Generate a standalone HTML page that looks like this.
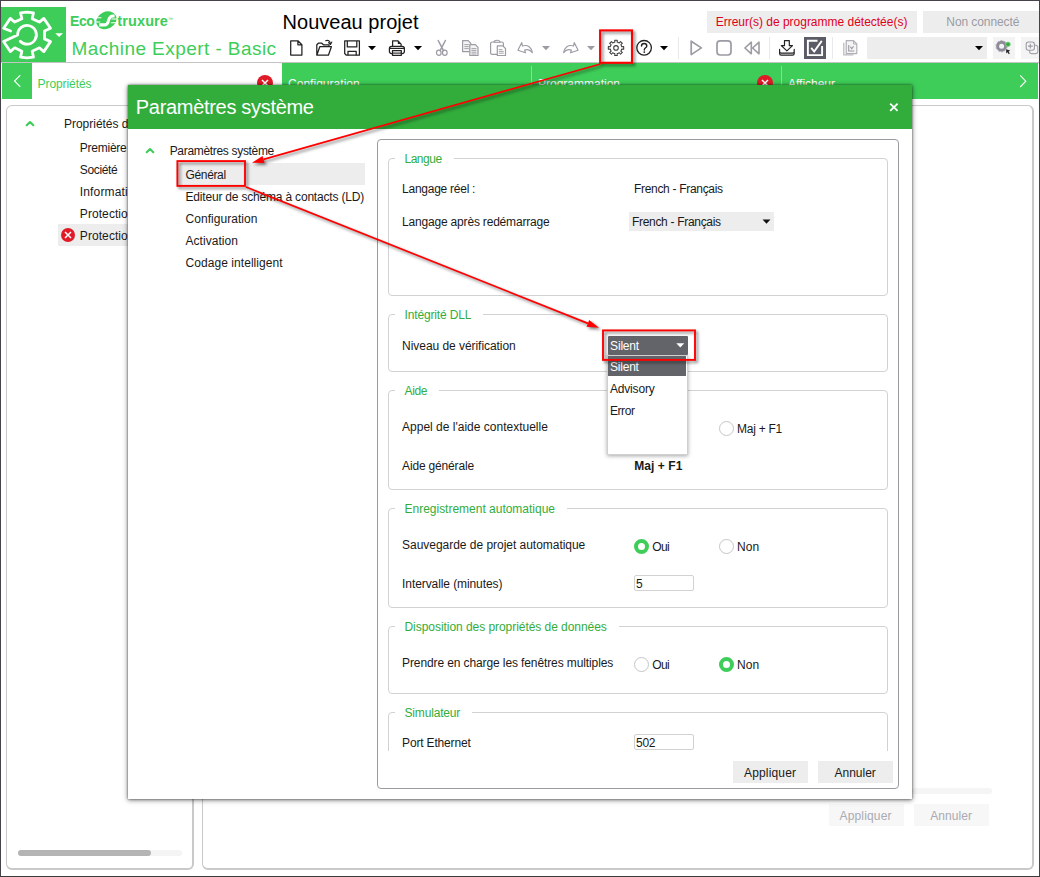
<!DOCTYPE html>
<html lang="fr"><head><meta charset="utf-8"><title>Paramètres système</title>
<style>
html,body{margin:0;padding:0;background:#fff;}
body{width:1040px;height:877px;overflow:hidden;position:relative;font-family:"Liberation Sans",sans-serif;color:#1a1a1a;}
div,span,svg{position:absolute;box-sizing:border-box;}
body>div{left:0;top:0;width:0;height:0;}
.t{white-space:pre;line-height:1;}
.gb{border:1px solid #d2d2d2;border-radius:4px;}
.lg{background:#fff;height:12px;}
.rad{width:15px;height:15px;border-radius:50%;border:1px solid #c6c6c6;background:#fff;}
.rad.on{border:4px solid #3dcd58;}
.inp{border:1px solid #d2d2d2;background:#fff;border-radius:2px;}
.btn{background:#ededed;}
.hl{background:#ededed;}
</style></head>
<body>
<div id="frame">
<div style="left:0px;top:0px;width:1040px;height:1px;background:#47424a;"></div>
<div style="left:0px;top:0px;width:1px;height:877px;background:#47424a;"></div>
<div style="left:1039px;top:0px;width:1px;height:877px;background:#47424a;"></div>
<div style="left:0px;top:876px;width:1040px;height:1px;background:#3a3a3a;"></div>
</div>
<div id="header">
<div style="left:1px;top:7px;width:65px;height:55px;background:#3dcd58;"></div>
<div style="left:1px;top:62px;width:1038px;height:1px;background:#c4c4c4;"></div>
<span class="t" style="left:70.1px;top:14px;font-size:14px;letter-spacing:-0.54px;color:#3dcd58;font-weight:700;">Eco</span>
<span class="t" style="left:168.1px;top:17.3px;font-size:5px;color:#3dcd58;">™</span>
<span class="t" style="left:117.3px;top:13.6px;font-size:14.5px;letter-spacing:0.11px;color:#3dcd58;font-weight:700;">truxure</span>
<span class="t" style="left:71.5px;top:38.5px;font-size:19px;letter-spacing:0.44px;color:#3dcd58;">Machine Expert - Basic</span>
<span class="t" style="left:282.5px;top:12px;font-size:20px;letter-spacing:0.03px;color:#000;">Nouveau projet</span>
<div style="left:707px;top:11px;width:210px;height:22px;background:#ededed;"></div>
<span class="t" style="left:715.7px;top:15.9px;font-size:12px;letter-spacing:-0.01px;color:#e0001b;">Erreur(s) de programme détectée(s)</span>
<div style="left:923px;top:11px;width:116px;height:22px;background:#ededed;"></div>
<span class="t" style="left:946.3px;top:16px;font-size:12px;letter-spacing:-0.08px;color:#9a9ba3;">Non connecté</span>
<div style="left:804px;top:37px;width:22px;height:22px;background:#5b5c66;"></div>
<div style="left:867px;top:37px;width:120px;height:22px;background:#ededed;"></div>
<div style="left:993.4px;top:37px;width:21.6px;height:22px;background:#f3f3f3;"></div>
<div style="left:1021px;top:37px;width:18px;height:22px;background:#f4f4f4;"></div>
<div style="left:678px;top:37px;width:1px;height:22px;background:#e9e9e9;"></div>
<div style="left:769px;top:37px;width:1px;height:22px;background:#e9e9e9;"></div>
<div style="left:832px;top:37px;width:1px;height:22px;background:#e9e9e9;"></div>
</div>
<div id="tabbar">
<div style="left:2px;top:63px;width:1036px;height:36px;background:#3dcd58;"></div>
<div style="left:32px;top:63px;width:250px;height:36px;background:#fff;"></div>
<div style="left:531px;top:66px;width:1px;height:30px;background:#86de97;"></div>
<div style="left:781px;top:66px;width:1px;height:30px;background:#86de97;"></div>
<span class="t" style="left:37.6px;top:78.2px;font-size:12px;letter-spacing:-0.08px;color:#3dcd58;">Propriétés</span>
<span class="t" style="left:288px;top:78.2px;font-size:12px;letter-spacing:0.03px;color:#fff;">Configuration</span>
<span class="t" style="left:538px;top:78.2px;font-size:12px;color:#fff;">Programmation</span>
<span class="t" style="left:788px;top:78.2px;font-size:12px;letter-spacing:-0.02px;color:#fff;">Afficheur</span>
</div>
<div id="toolbar-icons">
<svg style="left:0px;top:0px;" width="66" height="62" viewBox="0 0 66 62" fill="none"><path d="M10.6 31 L3.6 28.3 L10.3 18.4 L14.7 22.1 L21.9 18.7 L20.5 12.8 L27 12.2 L33.5 12.8 L32.2 18.7 L39.4 22.1 L43.8 18.4 L50.5 28.3 L44.5 31 L44.5 38.9 L50.5 41.6 L43.8 51.6 L39.4 47.8 L32.2 51.2 L33.5 57.2 L27 57.8 L20.5 57.2 L21.9 51.2 L14.7 47.8 L10.3 51.6 L3.6 41.4 L17.6 34.9 A9.4 9.4 0 1 1 20.2 41.3" stroke="#fff" stroke-width="2.8" stroke-linejoin="round" stroke-linecap="round"/><path d="M55.2 33.2h7.8l-3.9 3.9z" fill="#fff"/></svg>
<svg style="left:95px;top:10px;" width="23" height="21" viewBox="0 0 23 21" fill="none"><ellipse cx="11.4" cy="10.3" rx="10.5" ry="8.5" transform="rotate(-27 11.4 10.3)" fill="#3dcd58"/><path d="M4.2 14.9h5.4c2.4 0 3-1.3 3.6-3.3l.6-2c.6-2.1 1.5-3.6 4.2-3.6h1.6" stroke="#fff" stroke-width="3.1"/><path d="M0 7.7h6.4M0 12h5.2M16.4 9h7M15.8 12.7h7" stroke="#fff" stroke-width="1.1"/></svg>
<svg style="left:289px;top:39px;" width="15" height="18" viewBox="0 0 15 18" fill="none"><path d="M1.7 1.8h7.2l4 4v10.3h-11.2z M8.9 1.8v4h4" stroke="#222" stroke-width="1.25" stroke-linejoin="round"/></svg>
<svg style="left:315px;top:38px;" width="19" height="19" viewBox="0 0 19 19" fill="none"><path d="M1.8 17.2v-10.4l1.6-1.6h3.4l1.6 1.6h5.6v1.9 M1.8 17.2l3-8.5h11.6l-3 8.5z" stroke="#222" stroke-width="1.25" stroke-linejoin="round"/><path d="M10.7 2.7c2.4-1 4.4.2 4.7 3.2 M13.5 4.7l2 1.8l1.3-2.4" stroke="#222" stroke-width="1.1" stroke-linecap="round" stroke-linejoin="round"/></svg>
<svg style="left:343px;top:39px;" width="19" height="18" viewBox="0 0 19 18" fill="none"><path d="M1.7 1.9h14.7v14.3h-13l-1.7-1.7z" stroke="#222" stroke-width="1.25" stroke-linejoin="round"/><path d="M4.3 1.9v6h9.5v-6 M5 16.2v-3.9h8.2v3.9" stroke="#222" stroke-width="1.25" stroke-linejoin="round"/></svg>
<svg style="left:368.2px;top:46px;" width="8" height="5" viewBox="0 0 8 5" fill="none"><path d="M0 0h8l-4 4.2z" fill="#000"/></svg>
<svg style="left:388px;top:39px;" width="18" height="18" viewBox="0 0 18 18" fill="none"><path d="M4.6 7.3v-5.5h5.2l3.3 3.3v2.2" stroke="#222" stroke-width="1.25" stroke-linejoin="round"/><path d="M9.8 1.8v3.3h3.3z" fill="#222"/><rect x="1.4" y="7.3" width="15" height="7.2" rx="2.2" stroke="#222" stroke-width="1.25" fill="#fff"/><path d="M1.6 9.4h14.6" stroke="#222" stroke-width="1.2"/><path d="M4.5 11.7h8.8v4.6h-8.8z" stroke="#222" stroke-width="1.25" fill="#fff" stroke-linejoin="round"/><path d="M4.8 14.1h8.2" stroke="#222" stroke-width="1.1"/></svg>
<svg style="left:413.5px;top:46px;" width="8" height="5" viewBox="0 0 8 5" fill="none"><path d="M0 0h8l-4 4.2z" fill="#000"/></svg>
<svg style="left:435px;top:39px;" width="14" height="18" viewBox="0 0 14 18" fill="none"><path d="M3.2 1.5l5.3 10.2 M10.4 1.5l-5.3 10.2" stroke="#9b9ca4" stroke-width="1.5" stroke-linecap="round"/><ellipse cx="3.8" cy="13.8" rx="2.3" ry="2.6" stroke="#9b9ca4" stroke-width="1.2"/><ellipse cx="9.8" cy="13.8" rx="2.3" ry="2.6" stroke="#9b9ca4" stroke-width="1.2"/></svg>
<svg style="left:461px;top:39px;" width="19" height="18" viewBox="0 0 19 18" fill="none"><path d="M1.6 1.6h5.6l2.6 2.7v8.4h-8.2z" stroke="#9b9ca4" stroke-width="1.2" fill="#f4f4f4" stroke-linejoin="round"/><path d="M3.3 5.6h4.5M3.3 7.6h4.5M3.3 9.6h4.5" stroke="#9b9ca4" stroke-width=".9"/><path d="M8.8 5.6h5.6l2.6 2.7v8.2h-8.2z" stroke="#9b9ca4" stroke-width="1.2" fill="#f4f4f4" stroke-linejoin="round"/><path d="M10.4 9.6h5M10.4 11.4h5M10.4 13.2h5M10.4 15h5" stroke="#9b9ca4" stroke-width=".9"/></svg>
<svg style="left:489px;top:39px;" width="19" height="18" viewBox="0 0 19 18" fill="none"><rect x="1.6" y="3" width="12.8" height="12.4" rx="1.6" stroke="#9b9ca4" stroke-width="1.2"/><path d="M5 3.3c0-1.6 1.4-2 3-2s3 .4 3 2z" stroke="#9b9ca4" stroke-width="1.1" fill="#fff"/><path d="M8.3 6.9h5.5l2.7 2.6v7h-8.2z" stroke="#9b9ca4" stroke-width="1.2" fill="#fff" stroke-linejoin="round"/><path d="M9.8 10.6h3.6M9.8 12.4h5M9.8 14.2h5" stroke="#9b9ca4" stroke-width=".9"/></svg>
<svg style="left:516px;top:40px;" width="18" height="15" viewBox="0 0 18 15" fill="none"><path d="M5.8 2.6l-3.9 7.6l7.6 2.6l-.9-2.8c3.4-1.2 6 .2 7.8 2.6c-.8-5-4.6-8.4-10-6.6z" stroke="#9b9ca4" stroke-width="1.15" stroke-linejoin="round"/></svg>
<svg style="left:542.3px;top:46px;" width="8" height="5" viewBox="0 0 8 5" fill="none"><path d="M0 0h8l-4 4.2z" fill="#9b9ca4"/></svg>
<svg style="left:562px;top:40px;" width="18" height="15" viewBox="0 0 18 15" fill="none"><path d="M12.2 2.6l3.9 7.6l-7.6 2.6l.9-2.8c-3.4-1.2-6 .2-7.8 2.6c.8-5 4.6-8.4 10-6.6z" stroke="#9b9ca4" stroke-width="1.15" stroke-linejoin="round"/></svg>
<svg style="left:587.3px;top:46px;" width="8" height="5" viewBox="0 0 8 5" fill="none"><path d="M0 0h8l-4 4.2z" fill="#9b9ca4"/></svg>
<svg style="left:606px;top:38px;" width="20" height="20" viewBox="0 0 20 20" fill="none"><path d="M8.72 2.21 L11.28 2.21 L11.1 4.1 L13.32 5.03 L14.54 3.55 L16.35 5.36 L14.87 6.58 L15.8 8.8 L17.69 8.62 L17.69 11.18 L15.8 11 L14.87 13.22 L16.35 14.44 L14.54 16.25 L13.32 14.77 L11.1 15.7 L11.28 17.59 L8.72 17.59 L8.9 15.7 L6.68 14.77 L5.46 16.25 L3.65 14.44 L5.13 13.22 L4.2 11 L2.31 11.18 L2.31 8.62 L4.2 8.8 L5.13 6.58 L3.65 5.36 L5.46 3.55 L6.68 5.03 L8.9 4.1z" stroke="#3c3c3c" stroke-width="1.05" stroke-linejoin="round"/><circle cx="10" cy="9.9" r="2.3" stroke="#3c3c3c" stroke-width="1.05"/></svg>
<svg style="left:635px;top:39px;" width="18" height="18" viewBox="0 0 18 18" fill="none"><circle cx="9.1" cy="8.8" r="7.3" stroke="#222" stroke-width="1.3"/><path d="M6.5 7.1c0-1.7 1.2-2.6 2.7-2.6s2.6.9 2.6 2.4c0 1.9-2.5 2-2.5 4.1" stroke="#222" stroke-width="1.4" stroke-linecap="round"/><circle cx="9.3" cy="13.1" r=".9" fill="#222"/></svg>
<svg style="left:660px;top:46.1px;" width="8" height="5" viewBox="0 0 8 5" fill="none"><path d="M0 0h8l-4 4.2z" fill="#000"/></svg>
<svg style="left:689px;top:39px;" width="15" height="18" viewBox="0 0 15 18" fill="none"><path d="M2.2 2.2l10.2 6.7l-10.2 6.7z" stroke="#9b9ca4" stroke-width="1.7" stroke-linejoin="round"/></svg>
<svg style="left:715px;top:39px;" width="18" height="18" viewBox="0 0 18 18" fill="none"><rect x="2" y="1.9" width="14" height="14.1" rx="3.2" stroke="#9b9ca4" stroke-width="1.7"/></svg>
<svg style="left:743px;top:40px;" width="18" height="16" viewBox="0 0 18 16" fill="none"><path d="M8.3 2.2v11.6l-6.4-5.8z M16 2.2v11.6l-6.4-5.8z" stroke="#9b9ca4" stroke-width="1.6" stroke-linejoin="round"/></svg>
<svg style="left:778px;top:39px;" width="18" height="18" viewBox="0 0 18 18" fill="none"><path d="M6.5 1.6h4.8v5h3.2l-5.6 5.3l-5.6-5.3h3.2z" stroke="#222" stroke-width="1.2" stroke-linejoin="round"/><path d="M1.6 10.4v4.2c0 1 .6 1.6 1.6 1.6h11.4c1 0 1.6-.6 1.6-1.6v-4.2 M1.6 12.6c0 1 .6 1.6 1.6 1.6h11.4c1 0 1.6-.6 1.6-1.6" stroke="#222" stroke-width="1.2" stroke-linejoin="round" stroke-linecap="round"/></svg>
<svg style="left:804px;top:37px;" width="22" height="22" viewBox="0 0 22 22" fill="none"><path d="M13.5 3.7h-9.6v14.4h14.2v-9" stroke="#fff" stroke-width="1.9"/><path d="M7.2 10.9l3 3.6l7.6-10.6" stroke="#fff" stroke-width="1.9" stroke-linejoin="miter"/></svg>
<svg style="left:842px;top:39px;" width="17" height="18" viewBox="0 0 17 18" fill="none"><path d="M1.8 3.8v12h9.6" stroke="#bcbcc1" stroke-width="1.3"/><path d="M4.2 1.7h7.3l3.3 3.3v9.6h-10.6z" stroke="#b0b0b6" stroke-width="1.2" fill="#f4f4f4" stroke-linejoin="round"/><path d="M11.5 1.7v3.3h3.3" stroke="#b0b0b6" stroke-width="1"/><path d="M6.7 6v6h5.6 M8.4 7.6l1.4 2.2l1.8-2.6" stroke="#9a9aa2" stroke-width="1.1"/></svg>
<svg style="left:974.8px;top:46px;" width="8" height="5" viewBox="0 0 8 5" fill="none"><path d="M0 0h8l-4 4.2z" fill="#000"/></svg>
<svg style="left:993px;top:37px;" width="22" height="22" viewBox="0 0 22 22" fill="none"><circle cx="8.6" cy="9.2" r="4" stroke="#8d8d99" stroke-width="3"/><circle cx="8.6" cy="9.2" r="5.6" stroke="#a9a9b6" stroke-width="1" stroke-dasharray="2 1.5"/><circle cx="15" cy="7.3" r="2.3" fill="#3aa845" stroke="#7fd48a" stroke-width=".8"/><path d="M13.2 12.2l4 1.2l-1.6 1.2l1.2 2l-1 .6l-1.2-2l-1.4 1.4z" fill="#222"/></svg>
<svg style="left:1024px;top:39px;" width="15" height="18" viewBox="0 0 15 18" fill="none"><rect x="5.6" y="6.3" width="8.2" height="8.3" rx="2.2" stroke="#a4a4ab" stroke-width="1.1" fill="#f4f4f4"/><rect x="2.2" y="3" width="8.2" height="8.3" rx="2.2" stroke="#9b9ca4" stroke-width="1.1" fill="#f4f4f4"/><path d="M6.3 4.8v4.7M4 7.15h4.7" stroke="#9b9ca4" stroke-width="1.1"/></svg>
<svg style="left:12px;top:73px;" width="12" height="16" viewBox="0 0 12 16" fill="none"><path d="M8.3 2.2l-5.8 5.8l5.8 5.8" stroke="#fff" stroke-width="1.1"/></svg>
<svg style="left:1017px;top:73px;" width="12" height="16" viewBox="0 0 12 16" fill="none"><path d="M3.2 2.4l5.6 5.8l-5.6 5.8" stroke="#fff" stroke-width="1.1"/></svg>
<svg style="left:257px;top:75px;" width="16" height="16" viewBox="0 0 16 16" fill="none"><circle cx="8" cy="8" r="8" fill="#e01b27"/><path d="M5 5l6 6M11 5l-6 6" stroke="#fff" stroke-width="1.5"/></svg>
<svg style="left:757px;top:75px;" width="16" height="16" viewBox="0 0 16 16" fill="none"><circle cx="8" cy="8" r="8" fill="#e01b27"/><path d="M5 5l6 6M11 5l-6 6" stroke="#fff" stroke-width="1.5"/></svg>
</div>
<div id="workspace">
<div style="left:6px;top:105px;width:188px;height:765px;border:solid #c9c9c9;border-width:1px 2px 2px 1px;border-radius:6px;"></div>
<div style="left:202px;top:105px;width:832px;height:765px;border:solid #c9c9c9;border-width:1px 2px 2px 1px;border-radius:6px;"></div>
<div class="hl" style="left:58px;top:224px;width:136px;height:22px;"></div>
<span class="t" style="left:64px;top:118.1px;font-size:12px;letter-spacing:-0.02px;">Propriétés d</span>
<span class="t" style="left:79.8px;top:141.8px;font-size:12px;letter-spacing:-0.24px;">Première</span>
<span class="t" style="left:79.8px;top:163.8px;font-size:12px;letter-spacing:-0.34px;">Société</span>
<span class="t" style="left:79.8px;top:185.8px;font-size:12px;letter-spacing:0.16px;">Informati</span>
<span class="t" style="left:79.8px;top:207.8px;font-size:12px;letter-spacing:0.08px;">Protectio</span>
<span class="t" style="left:79.8px;top:229.8px;font-size:12px;letter-spacing:0.08px;">Protectio</span>
<svg style="left:60px;top:227px;" width="16" height="16" viewBox="0 0 16 16" fill="none"><circle cx="8" cy="8" r="7" fill="#e01b27"/><path d="M5 5l6 6M11 5l-6 6" stroke="#fff" stroke-width="1.5"/></svg>
<svg style="left:24px;top:119px;" width="12" height="9" viewBox="0 0 12 9" fill="none"><path d="M2.7 6.2l3.3-3.2l3.3 3.2" stroke="#3dcd58" stroke-width="2.1" stroke-linecap="round" stroke-linejoin="round"/></svg>
<div style="left:18px;top:850px;width:164px;height:6px;background:#f4f4f4;border-radius:3px;"></div>
<div style="left:18px;top:850px;width:133px;height:6px;background:#b4b4b4;border-radius:3px;"></div>
<div style="left:912px;top:788px;width:80px;height:6px;background:#f5f5f5;border-radius:3px;"></div>
<div style="left:829px;top:804px;width:75px;height:22px;background:#f7f7f7;"></div>
<div style="left:914px;top:804px;width:75px;height:22px;background:#f7f7f7;"></div>
<span class="t" style="left:839.5px;top:809.8px;font-size:12px;letter-spacing:0.16px;color:#a9aab3;">Appliquer</span>
<span class="t" style="left:930.3px;top:809.8px;font-size:12px;letter-spacing:0.05px;color:#a9aab3;">Annuler</span>
</div>
<div id="dialog">
<div style="left:128px;top:85px;width:784px;height:714px;background:#fff;box-shadow:0 1px 5px rgba(0,0,0,.55), 0 0 2px rgba(0,0,0,.5);"></div>
<div style="left:128px;top:85px;width:784px;height:44px;background:#32ad3c;"></div>
<span class="t" style="left:135.8px;top:96.7px;font-size:20px;letter-spacing:-0.31px;color:#fff;">Paramètres système</span>
<div class="hl" style="left:177.5px;top:163px;width:187.5px;height:22px;"></div>
<span class="t" style="left:169.7px;top:145.1px;font-size:12px;letter-spacing:-0.32px;">Paramètres système</span>
<span class="t" style="left:185.5px;top:168.8px;font-size:12px;letter-spacing:-0.35px;">Général</span>
<span class="t" style="left:185.5px;top:190.8px;font-size:12px;letter-spacing:-0.19px;">Editeur de schéma à contacts (LD)</span>
<span class="t" style="left:185.5px;top:212.8px;font-size:12px;letter-spacing:0.05px;">Configuration</span>
<span class="t" style="left:185.5px;top:234.8px;font-size:12px;letter-spacing:0.04px;">Activation</span>
<span class="t" style="left:185.5px;top:256.8px;font-size:12px;letter-spacing:0.06px;">Codage intelligent</span>
<svg style="left:144px;top:146px;" width="12" height="9" viewBox="0 0 12 9" fill="none"><path d="M2.7 6.2l3.3-3.2l3.3 3.2" stroke="#3dcd58" stroke-width="2.1" stroke-linecap="round" stroke-linejoin="round"/></svg>
<svg style="left:886px;top:99px;" width="16" height="16" viewBox="0 0 16 16" fill="none"><path d="M4.2 4.6l7.4 7.2M11.6 4.6l-7.4 7.2" stroke="#fff" stroke-width="1.8"/></svg>
<div style="left:377px;top:139px;width:522px;height:650px;border:1px solid #9a9aa2;border-radius:4px;"></div>
<div class="gb" style="left:388px;top:158px;width:500px;height:138px;"></div>
<div class="lg" style="left:395px;top:155px;width:58.5px;height:12px;"></div>
<span class="t" style="left:404.5px;top:153.1px;font-size:12px;letter-spacing:-0.49px;color:#32ad3c;">Langue</span>
<div class="gb" style="left:388px;top:314px;width:500px;height:58px;"></div>
<div class="lg" style="left:395px;top:311px;width:88px;height:12px;"></div>
<span class="t" style="left:404.5px;top:309.1px;font-size:12px;letter-spacing:-0.15px;color:#32ad3c;">Intégrité DLL</span>
<div class="gb" style="left:388px;top:390px;width:500px;height:100px;"></div>
<div class="lg" style="left:395px;top:387px;width:44px;height:12px;"></div>
<span class="t" style="left:404.5px;top:385.1px;font-size:12px;letter-spacing:-0.34px;color:#32ad3c;">Aide</span>
<div class="gb" style="left:388px;top:508px;width:500px;height:100px;"></div>
<div class="lg" style="left:395px;top:505px;width:171.5px;height:12px;"></div>
<span class="t" style="left:404.5px;top:503.1px;font-size:12px;letter-spacing:-0.01px;color:#32ad3c;">Enregistrement automatique</span>
<div class="gb" style="left:388px;top:626px;width:500px;height:68px;"></div>
<div class="lg" style="left:395px;top:623px;width:224px;height:12px;"></div>
<span class="t" style="left:404.5px;top:621.1px;font-size:12px;letter-spacing:-0.05px;color:#32ad3c;">Disposition des propriétés de données</span>
<div class="gb" style="left:388px;top:712px;width:500px;height:48px;"></div>
<div class="lg" style="left:395px;top:709px;width:76.8px;height:12px;"></div>
<span class="t" style="left:404.5px;top:707.1px;font-size:12px;letter-spacing:-0.17px;color:#32ad3c;">Simulateur</span>
<div style="left:381px;top:751px;width:515px;height:36px;background:#fff;"></div>
<span class="t" style="left:402.1px;top:182.8px;font-size:12px;letter-spacing:-0.26px;">Langage réel :</span>
<span class="t" style="left:402.1px;top:215.8px;font-size:12px;letter-spacing:-0.19px;">Langage après redémarrage</span>
<span class="t" style="left:402.1px;top:340.1px;font-size:12px;letter-spacing:-0.05px;">Niveau de vérification</span>
<span class="t" style="left:402.1px;top:421.1px;font-size:12px;">Appel de l&#x27;aide contextuelle</span>
<span class="t" style="left:402.1px;top:460px;font-size:12px;letter-spacing:-0.17px;">Aide générale</span>
<span class="t" style="left:402.1px;top:539.3px;font-size:12px;letter-spacing:-0.03px;">Sauvegarde de projet automatique</span>
<span class="t" style="left:402.1px;top:578.2px;font-size:12px;letter-spacing:-0.09px;">Intervalle (minutes)</span>
<span class="t" style="left:402.1px;top:657.2px;font-size:12px;letter-spacing:-0.11px;">Prendre en charge les fenêtres multiples</span>
<span class="t" style="left:402.1px;top:736.8px;font-size:12px;letter-spacing:-0.17px;">Port Ethernet</span>
<span class="t" style="left:634px;top:182.8px;font-size:12px;letter-spacing:-0.31px;">French - Français</span>
<div class="hl" style="left:629px;top:212px;width:145px;height:19px;"></div>
<span class="t" style="left:632px;top:215.8px;font-size:12px;letter-spacing:-0.31px;">French - Français</span>
<div class="rad" style="left:718.9px;top:421.1px;width:15px;height:15px;"></div>
<span class="t" style="left:737.1px;top:422.8px;font-size:12px;letter-spacing:-0.26px;">Maj + F1</span>
<span class="t" style="left:634.2px;top:460px;font-size:12px;letter-spacing:0.07px;font-weight:700;">Maj + F1</span>
<div class="rad on" style="left:634px;top:539px;width:15px;height:15px;"></div>
<span class="t" style="left:652.3px;top:540.8px;font-size:12px;letter-spacing:-0.59px;">Oui</span>
<div class="rad" style="left:718.9px;top:539px;width:15px;height:15px;"></div>
<span class="t" style="left:737.1px;top:540.8px;font-size:12px;letter-spacing:0.04px;">Non</span>
<div class="rad" style="left:634px;top:656.9px;width:15px;height:15px;"></div>
<span class="t" style="left:652.3px;top:658.8px;font-size:12px;letter-spacing:-0.59px;">Oui</span>
<div class="rad on" style="left:718.9px;top:656.9px;width:15px;height:15px;"></div>
<span class="t" style="left:737.1px;top:658.8px;font-size:12px;letter-spacing:0.04px;">Non</span>
<div class="inp" style="left:634px;top:575px;width:60px;height:16px;"></div>
<span class="t" style="left:636px;top:577.7px;font-size:12px;">5</span>
<div class="inp" style="left:634px;top:734px;width:60px;height:16px;"></div>
<span class="t" style="left:636px;top:736.6px;font-size:12px;letter-spacing:-0.27px;">502</span>
<div class="btn" style="left:733px;top:761px;width:75px;height:22px;"></div>
<span class="t" style="left:744px;top:766.8px;font-size:12px;letter-spacing:0.16px;">Appliquer</span>
<div class="btn" style="left:818px;top:761px;width:75px;height:22px;"></div>
<span class="t" style="left:834.5px;top:766.8px;font-size:12px;letter-spacing:-0.01px;">Annuler</span>
<div style="left:606.5px;top:355px;width:81px;height:100px;background:#fff;border:1px solid #d0d0d0;box-shadow:0 1px 4px rgba(0,0,0,.35);"></div>
<div style="left:608px;top:356px;width:78px;height:20px;background:#626469;"></div>
<span class="t" style="left:609.9px;top:360.8px;font-size:12px;letter-spacing:-0.19px;color:#fff;">Silent</span>
<span class="t" style="left:609.9px;top:382.8px;font-size:12px;letter-spacing:-0.16px;">Advisory</span>
<span class="t" style="left:609.9px;top:404.8px;font-size:12px;letter-spacing:-0.39px;">Error</span>
<div style="left:607.5px;top:336px;width:80px;height:19px;background:#626469;border-radius:1px;"></div>
<span class="t" style="left:610.1px;top:340.1px;font-size:12px;letter-spacing:-0.19px;color:#fff;">Silent</span>
<svg style="left:762px;top:219px;" width="10" height="6" viewBox="0 0 10 6" fill="none"><path d="M.5 .5h8l-4 4.2z" fill="#111"/></svg>
<svg style="left:675.5px;top:343px;" width="10" height="6" viewBox="0 0 10 6" fill="none"><path d="M.3 .3h8l-4 4.3z" fill="#fff"/></svg>
</div>
<div id="annotations">
<svg style="left:0;top:0;filter:drop-shadow(2px 2.5px 1.5px rgba(0,0,0,.5));" width="1040" height="877" viewBox="0 0 1040 877" fill="none"><rect x="600.1" y="30.4" width="31.9" height="32.4" stroke="#ff0000" stroke-width="2.1"/><rect x="177.4" y="161.1" width="67.6" height="24.8" stroke="#ff0000" stroke-width="1.9"/><rect x="603" y="330.4" width="92" height="29.5" stroke="#ff0000" stroke-width="1.9"/><path d="M600.5 64L263.5 159.4" stroke="#ff0000" stroke-width="1.7"/><path d="M252 162.7L262.5 155.9L264.6 163z" fill="#ff0000"/><path d="M246 187L587.9 323.4" stroke="#ff0000" stroke-width="1.7"/><path d="M599 327.8L586.5 326.8L589.2 319.9z" fill="#ff0000"/></svg>
</div>
</body></html>
